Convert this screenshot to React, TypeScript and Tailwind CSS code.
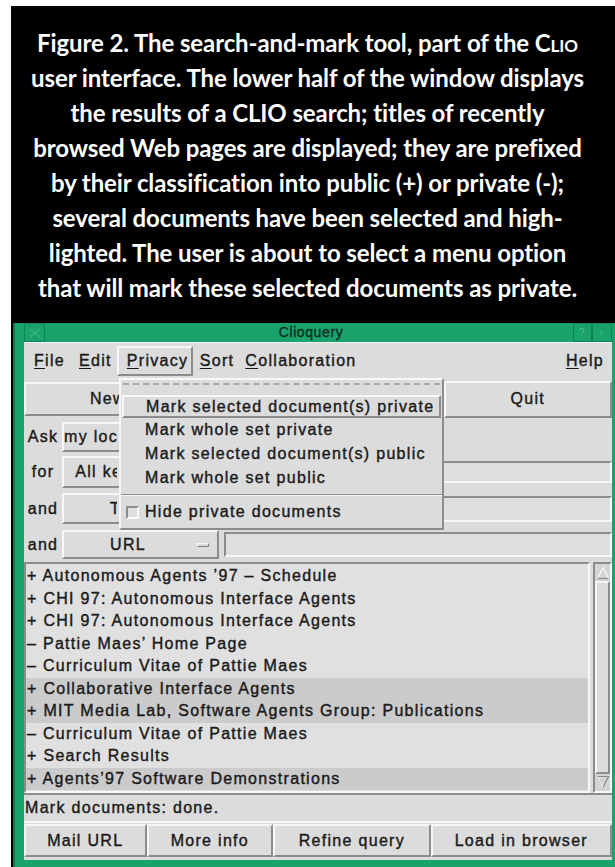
import type { ReactNode } from "react";
import clsx from "clsx";

type Doc = { sign: string; title: string; picked: boolean };

const docs: Doc[] = [
  { sign: "+", title: "Autonomous Agents ’97 – Schedule", picked: false },
  { sign: "+", title: "CHI 97: Autonomous Interface Agents", picked: false },
  { sign: "+", title: "CHI 97: Autonomous Interface Agents", picked: false },
  { sign: "–", title: "Pattie Maes’ Home Page", picked: false },
  { sign: "–", title: "Curriculum Vitae of Pattie Maes", picked: false },
  { sign: "+", title: "Collaborative Interface Agents", picked: true },
  { sign: "+", title: "MIT Media Lab, Software Agents Group: Publications", picked: true },
  { sign: "–", title: "Curriculum Vitae of Pattie Maes", picked: false },
  { sign: "+", title: "Search Results", picked: false },
  { sign: "+", title: "Agents’97 Software Demonstrations", picked: true },
];

const privacyItems = [
  "Mark whole set private",
  "Mark selected document(s) public",
  "Mark whole set public",
];

// Motif-ish bevels
function Raised({ className, children }: { className?: string; children?: ReactNode }) {
  return (
    <div
      className={clsx(
        "border-2 border-t-[#f7f7f7] border-l-[#f7f7f7] border-r-[#8c8c8c] border-b-[#8c8c8c]",
        className
      )}
    >
      {children}
    </div>
  );
}

function Sunken({ className, children }: { className?: string; children?: ReactNode }) {
  return (
    <div
      className={clsx(
        "border-2 border-t-[#8c8c8c] border-l-[#8c8c8c] border-r-[#f7f7f7] border-b-[#f7f7f7]",
        className
      )}
    >
      {children}
    </div>
  );
}

function Key({ children }: { children: ReactNode }) {
  return <span className="underline underline-offset-2 decoration-1">{children}</span>;
}

// option menu button; the part under the open pulldown is cut off
function OptionButton({ label, className, cut }: { label: string; className?: string; cut?: boolean }) {
  return (
    <Raised className={clsx("w-[157px] flex items-center overflow-hidden", className)}>
      <div className={clsx("overflow-hidden", cut ? "w-[53px]" : "w-[128px]")}>
        <div className="w-[128px] text-center whitespace-nowrap">{label}</div>
      </div>
      {!cut && (
        <div className="ml-[5px] w-[12px] h-[4px] border border-t-[#f7f7f7] border-l-[#f7f7f7] border-r-[#7c7c7c] border-b-[#7c7c7c]" />
      )}
    </Raised>
  );
}

function ArrowUp() {
  return (
    <svg width="14" height="14" viewBox="0 0 14 14">
      <path d="M7 1.5 L12.5 12.5 L1.5 12.5 Z" fill="none" stroke="#f7f7f7" strokeWidth="1.2" />
      <path d="M12.5 12.5 L1.5 12.5" stroke="#8c8c8c" strokeWidth="1.2" />
    </svg>
  );
}

function ArrowDown() {
  return (
    <svg width="14" height="14" viewBox="0 0 14 14">
      <path d="M1.5 1.5 L12.5 1.5 L7 12.5 Z" fill="none" stroke="#8c8c8c" strokeWidth="1.2" />
      <path d="M1.5 1.5 L7 12.5" stroke="#f7f7f7" strokeWidth="1.2" />
    </svg>
  );
}

export default function App() {
  return (
    <div className="w-[615px] h-[867px] bg-white pt-[6px] pl-[11px] overflow-hidden">
      <div className="h-full bg-black flex flex-col">
        {/* figure caption */}
        <div className="h-[317px] flex flex-col justify-center text-center text-white font-['Lato','Open_Sans',sans-serif] font-bold text-[24px] leading-[35px] pr-[11px] tracking-[-0.1px]">
          <div>
            Figure 2. The search-and-mark tool, part of the <span className="[font-variant:small-caps]">Clio</span>
          </div>
          <div>user interface. The lower half of the window displays</div>
          <div>the results of a CLIO search; titles of recently</div>
          <div>browsed Web pages are displayed; they are prefixed</div>
          <div>by their classification into public (+) or private (-);</div>
          <div>several documents have been selected and high-</div>
          <div>lighted. The user is about to select a menu option</div>
          <div>that will mark these selected documents as private.</div>
        </div>

        {/* Clioquery window */}
        <div className="flex-1 ml-[2px] bg-[#19a26b] flex flex-col pl-[9px] pr-[3px] pb-[7px] border-l-2 border-l-[#0f7a4e] font-['Liberation_Sans',Arial,sans-serif] text-[16px] tracking-[1.3px] text-[#1a1a1a] [-webkit-text-stroke:0.4px_#1a1a1a]">
          <div className="h-[19px] flex items-center relative">
            <div className="w-[21px] h-[19px] border border-[#0f8454] flex items-center justify-center">
              <svg width="12" height="10" viewBox="0 0 12 10">
                <path d="M1 1 L11 9 M11 1 L1 9" stroke="#4cc08f" strokeWidth="1" />
              </svg>
            </div>
            <div className="flex-1 text-center text-[14px] tracking-[0.6px] text-[#10301f] [-webkit-text-stroke:0.4px_#10301f] pl-[4px]">
              Clioquery
            </div>
            <div className="w-[19px] h-[19px] border border-[#0f8454] flex items-center justify-center text-[10px] text-[#4cc08f] [-webkit-text-stroke:0px]">
              ?
            </div>
            <div className="w-[20px] h-[19px] border border-[#0f8454] flex items-center justify-center text-[10px] text-[#4cc08f] [-webkit-text-stroke:0px]">
              ›
            </div>
          </div>

          <div className="flex-1 bg-[#dcdcdc] relative flex flex-col">
            {/* menu bar */}
            <div className="h-[36px] flex items-center border-t border-t-[#f2f2f2]">
              <div className="ml-[10px]">
                <Key>F</Key>ile
              </div>
              <div className="ml-[14px]">
                <Key>E</Key>dit
              </div>
              <Raised className="ml-[5px] h-[30px] w-[76px] flex items-center pl-[8px]">
                <span>
                  <Key>P</Key>rivacy
                </span>
              </Raised>
              <div className="ml-[7px]">
                <Key>S</Key>ort
              </div>
              <div className="ml-[11px]">
                <Key>C</Key>ollaboration
              </div>
              <div className="ml-auto mr-[8px]">
                <Key>H</Key>elp
              </div>
            </div>

            {/* command buttons */}
            <div className="h-[42px] flex items-center">
              <Raised className="w-[178px] h-[34px] flex items-center">
                <div className="w-[93px] overflow-hidden self-stretch flex items-center pl-[64px]">
                  <span className="whitespace-nowrap">New...</span>
                </div>
              </Raised>
              <Raised className="w-[243px] h-[34px]" />
              <Raised className="w-[169px] h-[37px] flex items-center justify-center">Quit</Raised>
            </div>

            {/* query rows */}
            <div className="h-[33px] flex items-center">
              <div className="w-[38px] text-center">Ask</div>
              <OptionButton label="my local history" className="h-[30px]" cut />
            </div>
            <div className="h-[37px] flex items-center">
              <div className="w-[38px] text-center">for</div>
              <OptionButton label="All keywords" className="h-[32px]" cut />
              <Sunken className="ml-[5px] flex-1 h-[22px] bg-[#dedede]" />
            </div>
            <div className="h-[37px] flex items-center">
              <div className="w-[38px] text-center">and</div>
              <OptionButton label="Title" className="h-[31px]" cut />
              <Sunken className="ml-[5px] flex-1 h-[26px] bg-[#dedede]" />
            </div>
            <div className="h-[35px] flex items-center">
              <div className="w-[38px] text-center">and</div>
              <OptionButton label="URL" className="h-[29px]" />
              <Sunken className="ml-[5px] flex-1 h-[25px] bg-[#dedede]" />
            </div>

            {/* results list */}
            <div className="h-[231px] flex">
              <Sunken className="w-[568px] h-full bg-[#e0e0e0] overflow-hidden pt-[1px]">
                {docs.map((d, i) => (
                  <div
                    key={i}
                    className={clsx(
                      "h-[22.5px] flex items-center pl-[1px] whitespace-nowrap",
                      d.picked && "bg-[#cbcbcb]"
                    )}
                  >
                    {d.sign} {d.title}
                  </div>
                ))}
              </Sunken>
              <Sunken className="ml-[3px] flex-1 h-full flex flex-col items-center bg-[#d4d4d4]">
                <div className="mt-[2px]">
                  <ArrowUp />
                </div>
                <Raised className="w-[15px] flex-1 my-[1px] bg-[#dcdcdc]" />
                <div className="mb-[2px]">
                  <ArrowDown />
                </div>
              </Sunken>
            </div>

            {/* status line */}
            <Sunken className="h-[30px] flex items-center pl-[1px] border-l-0 border-r-0">
              Mark documents: done.
            </Sunken>

            {/* action buttons */}
            <div className="h-[35px] flex items-center">
              <Raised className="w-[123px] h-[33px] flex items-center justify-center">Mail URL</Raised>
              <Raised className="w-[127px] h-[33px] flex items-center justify-center">More info</Raised>
              <Raised className="w-[158px] h-[33px] flex items-center justify-center">Refine query</Raised>
              <Raised className="w-[182px] h-[33px] flex items-center justify-center">Load in browser</Raised>
            </div>

            {/* Privacy pulldown */}
            <Raised className="absolute left-[95px] top-[36px] w-[325px] h-[152px] bg-[#dcdcdc] flex flex-col">
              <div className="mx-[2px] mt-[3px] h-[2px] border-t-2 border-dashed border-t-[#a8a8a8]" />
              <Raised className="mt-[10px] mx-[1px] h-[23px] flex items-center pl-[22px] whitespace-nowrap">
                Mark selected document(s) private
              </Raised>
              {privacyItems.map((t) => (
                <div key={t} className="h-[24px] flex items-center pl-[24px] whitespace-nowrap">
                  {t}
                </div>
              ))}
              <div className="mt-[4px] h-[2px] border-t border-t-[#8c8c8c] border-b border-b-[#f7f7f7]" />
              <div className="flex-1 flex items-center whitespace-nowrap">
                <Sunken className="ml-[5px] w-[13px] h-[13px] bg-[#dedede]" />
                <span className="ml-[6px]">Hide private documents</span>
              </div>
            </Raised>
          </div>
        </div>
      </div>
    </div>
  );
}
